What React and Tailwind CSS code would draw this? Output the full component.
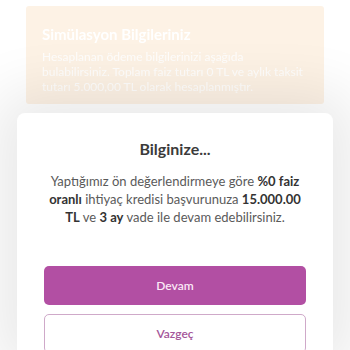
export default function App() {
  return (
    <div className="relative w-[350px] h-[350px] overflow-hidden bg-white" style={{ fontFamily: "Lato, 'Liberation Sans', sans-serif" }}>
      <div className="pt-[6px] px-[26px]">
        <div className="h-[98px] bg-[#fdf2e5] rounded-[3px] px-[16px] pt-[19px] text-white blur-[0.6px]">
          <div className="text-[15px] font-bold leading-[18px]">Simülasyon Bilgileriniz</div>
          <div className="mt-[6px] text-[12px] leading-[15px] opacity-90">
            Hesaplanan ödeme bilgilerinizi aşağıda bulabilirsiniz. Toplam faiz tutarı 0 TL ve aylık taksit tutarı 5.000,00 TL olarak hesaplanmıştır.
          </div>
        </div>
      </div>
      <div className="absolute left-[17px] right-[17px] top-[113px] bottom-0 bg-white rounded-t-[8px] shadow-[0_0_60px_20px_rgba(0,0,0,0.09)] flex flex-col items-center">
        <div className="mt-[25px] text-[16px] font-bold text-[#3b3b3b] leading-[22px]">Bilginize...</div>
        <div className="mt-[12px] text-center text-[13px] leading-[18px] text-[#5a5a5a] whitespace-nowrap">
          Yaptığımız ön değerlendirmeye göre <b className="text-[#333]">%0 faiz</b>
          <br />
          <b className="text-[#333]">oranlı</b> ihtiyaç kredisi başvurunuza <b className="text-[#333]">15.000.00</b>
          <br />
          <b className="text-[#333]">TL</b> ve <b className="text-[#333]">3 ay</b> vade ile devam edebilirsiniz.
        </div>
        <div className="mt-[40px] w-[262px] flex flex-col gap-[9px]">
          <button className="h-[39px] rounded-[5px] bg-[#b24fa3] text-[#fbe9f6] text-[12px] font-semibold">Devam</button>
          <button className="h-[39px] rounded-[5px] border border-[#cfa9c9] bg-white text-[#a4569a] text-[12px] font-semibold">Vazgeç</button>
        </div>
      </div>
    </div>
  );
}
